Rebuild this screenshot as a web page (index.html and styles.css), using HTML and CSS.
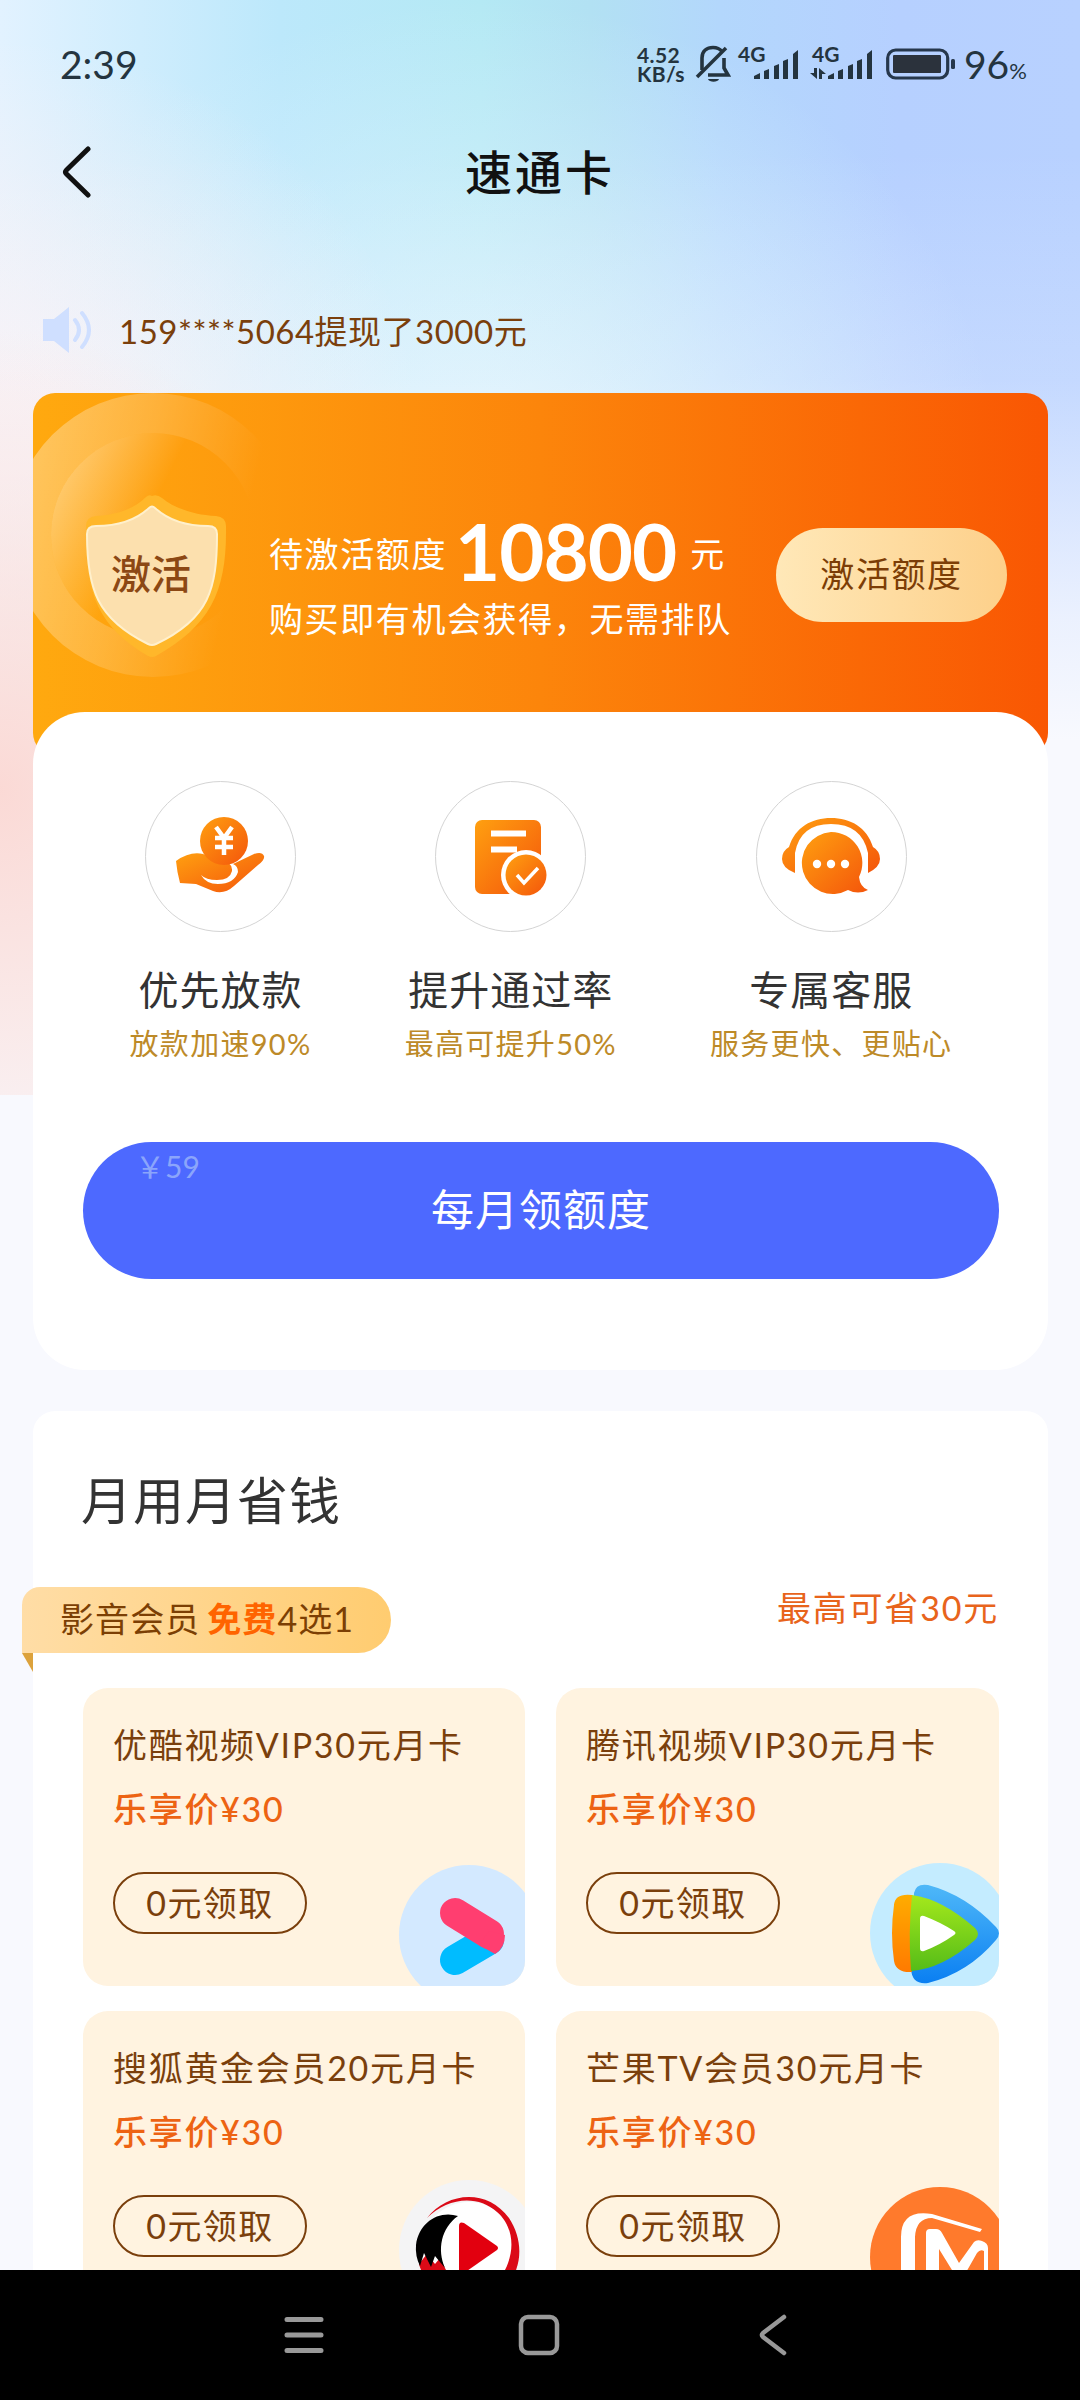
FILE: index.html
```html
<!DOCTYPE html>
<html lang="zh-CN">
<head>
    <meta charset="UTF-8">
    <meta name="viewport" content="width=device-width, initial-scale=1.0">
    <title>速通卡</title>
    <link rel="stylesheet" href="styles.css">
</head>
<body>
<div class="phone">
    <div class="status-bar">
        <span class="time">2:39</span>
        <div class="status-right">
            <div class="speed"><span>4.52</span><span>KB/s</span></div>
            <svg class="bell" width="36" height="40" viewBox="0 0 36 40" fill="none" stroke="#24343f" stroke-width="3.6">
                <path d="M7 26V14C7 7 12 3.500 18 3.500c4 0 7 1.500 9 4M29 14v10l4 7H13"/>
                <path d="M2 33L31 4"/>
                <path d="M13 35h11c-1 3.500-10 3.500-11 0z" fill="#24343f" stroke="none"/>
            </svg>
            <svg class="signal" width="62" height="40" viewBox="0 0 62 40" fill="#24343f">
                <text x="0" y="18" class="net">4G</text>
                <path d="M16 35v-3l6-3v6zM26 27l5-2v10h-5zM36 22l5-2v15h-5zM45 17l5-2v20h-5zM55 10l5-4v29h-5z"/>
            </svg>
            <svg class="signal second" width="64" height="40" viewBox="0 0 64 40" fill="#24343f">
                <text x="2" y="18" class="net">4G</text>
                <path d="M18 35v-3l6-3v6zM28 27l5-2v10h-5zM38 22l5-2v15h-5zM47 17l5-2v20h-5zM57 10l5-4v29h-5z"/>
                <path d="M4 24h3v11l-7-6h4zM9 24l7 6h-4v5H9z"/>
            </svg>
            <svg class="battery" width="72" height="32" viewBox="0 0 72 32">
                <rect x="1.700" y="2" width="60" height="28" rx="8" fill="none" stroke="#26374c" stroke-width="3.200"/>
                <rect x="7" y="7" width="48" height="18" rx="1" fill="#2b323c"/>
                <rect x="65" y="11" width="4" height="10" rx="1.500" fill="#26374c"/>
            </svg>
            <span class="percent">96<small>%</small></span>
        </div>
    </div>

    <header class="title-bar">
        <svg class="back" width="32" height="54" viewBox="0 0 32 54" fill="none" stroke="#111" stroke-width="5" stroke-linecap="round" stroke-linejoin="round">
            <path d="M27 4L5.500 25q-2 2 0 4L27 50"/>
        </svg>
        <h1>速通卡</h1>
    </header>

    <main>
        <div class="notice">
            <svg width="52" height="50" viewBox="0 0 52 50" fill="#cfdfff">
                <path d="M2 14h11L28 2v46L13 36H2z"/>
                <path d="M34 15q8 10 0 20M41 8q14 17 0 34" fill="none" stroke="#cfdfff" stroke-width="4" stroke-linecap="round"/>
            </svg>
            <span>159****5064提现了3000元</span>
        </div>

        <section class="banner">
            <svg class="shield" width="260" height="300" viewBox="0 0 260 300">
                <defs>
                    <linearGradient id="ring" x1="0" y1="0.350" x2="0.850" y2="0.550">
                        <stop offset="0" stop-color="#fff" stop-opacity="0.340"/>
                        <stop offset="0.500" stop-color="#fff" stop-opacity="0.180"/>
                        <stop offset="0.950" stop-color="#fff" stop-opacity="0"/>
                    </linearGradient>
                    <linearGradient id="disc" x1="0" y1="0.300" x2="0.500" y2="0.550">
                        <stop offset="0" stop-color="#fff" stop-opacity="0.400"/>
                        <stop offset="0.850" stop-color="#fff" stop-opacity="0"/>
                    </linearGradient>
                </defs>
                <path d="M-22 142a142 142 0 1 0 284 0a142 142 0 1 0 -284 0zM18 142a102 102 0 1 1 204 0a102 102 0 1 1 -204 0z" fill="url(#ring)" fill-rule="evenodd"/>
                <circle cx="120" cy="142" r="102" fill="url(#disc)"/>
                <path d="M119 103q-3-2-6 1c-12 12-30 18-50 19q-10 1-10 10c-1 65 10 100 62 130q4 2 8 0c55-31 71-65 70-130q0-9-10-10c-22-1-42-8-54-18q-5-4-10-2z" fill="#ffb72a"/>
                <path d="M116 115q3-3 6 0c12 11 28 18 53 18q9 0 9 8c0 55-8 85-61 110q-4 2-8 0C64 226 54 196 54 141q0-8 9-8c24 0 40-6 53-18z" fill="#fce0ae" stroke="#fff0cc" stroke-width="2"/>
            </svg>
            <span class="shield-text">激活</span>
            <div class="banner-info">
                <p class="amount"><span>待激活额度</span><b>10800</b><span>元</span></p>
                <p class="hint">购买即有机会获得，无需排队</p>
            </div>
            <button class="activate">激活额度</button>
        </section>

        <section class="rights">
            <div class="right-list">
                <div class="right-item">
                    <div class="icon-circle">
                        <svg width="90" height="80" viewBox="0 0 90 80">
                            <defs>
                                <linearGradient id="og" x1="0" y1="0" x2="1" y2="1">
                                    <stop offset="0" stop-color="#ffa010"/>
                                    <stop offset="1" stop-color="#f4550b"/>
                                </linearGradient>
                            </defs>
                            <path d="M0 44Q14 34 27 37Q34 40 45 44Q57 45 56 54Q54 63 41 63Q30 63 25 58Q30 67 42 67Q58 67 62 55Q62 49 57 47L78 37Q86 34 88 39Q89 43 82 48L58 69Q48 78 37 74L20 67L4 66Q1 55 0 44z" fill="url(#og)"/>
                            <circle cx="48" cy="24" r="24" fill="url(#og)"/>
                            <path d="M40 10l8 11 8-11M48 21v17M39 21h18M39 30h18" fill="none" stroke="#fff" stroke-width="4.500"/>
                        </svg>
                    </div>
                    <h3>优先放款</h3>
                    <p>放款加速90%</p>
                </div>
                <div class="right-item">
                    <div class="icon-circle">
                        <svg width="74" height="78" viewBox="0 0 74 78">
                            <rect x="1" y="2" width="66" height="74" rx="7" fill="url(#og)"/>
                            <path d="M17 15.500h35M17 31.500h26" stroke="#fff" stroke-width="6"/>
                            <circle cx="52" cy="57" r="25" fill="#fff"/>
                            <circle cx="52" cy="57" r="20.500" fill="url(#og)"/>
                            <path d="M43 57l7 8 14-15" fill="none" stroke="#fff" stroke-width="3.500"/>
                        </svg>
                    </div>
                    <h3>提升通过率</h3>
                    <p>最高可提升50%</p>
                </div>
                <div class="right-item">
                    <div class="icon-circle">
                        <svg width="98" height="80" viewBox="0 0 98 80">
                            <path d="M0 42Q0 34 7 30C13 10 30 1 49 1S85 10 91 30Q98 34 98 42T86 56V36Q80 7 49 7T13 36V56Q0 51 0 42z" fill="url(#og)"/>
                            <path d="M49 15a31 31 0 0 1 28 45q1 10 9 13-10 5-20 0a31 31 0 1 1-17-58z" fill="url(#og)"/>
                            <g fill="#fff"><circle cx="35" cy="47" r="4.200"/><circle cx="49" cy="47" r="4.200"/><circle cx="63" cy="47" r="4.200"/></g>
                        </svg>
                    </div>
                    <h3>专属客服</h3>
                    <p>服务更快、更贴心</p>
                </div>
            </div>
            <button class="get-quota"><span class="price-tag">￥59</span>每月领额度</button>
        </section>

        <section class="saving">
            <h2>月用月省钱</h2>
            <div class="saving-head">
                <div class="ribbon">影音会员 <b>免费</b>4选1</div>
                <span class="max-save">最高可省30元</span>
            </div>
            <div class="coupon-grid">
                <div class="coupon">
                    <h4>优酷视频VIP30元月卡</h4>
                    <p>乐享价¥30</p>
                    <button>0元领取</button>
                    <svg class="logo" width="140" height="140" viewBox="0 0 140 140">
                        <circle cx="70" cy="70" r="70" fill="#d3e9ff"/>
                        <path d="M56 95l34-20" stroke="#00bcff" stroke-width="30" stroke-linecap="round"/>
                        <path d="M56 48l34 21" stroke="#ff3e70" stroke-width="30" stroke-linecap="round"/>
                        <path d="M80 80L96 89Q106 83 106 70L90 66z" fill="#ff3e70"/>
                    </svg>
                </div>
                <div class="coupon">
                    <h4>腾讯视频VIP30元月卡</h4>
                    <p>乐享价¥30</p>
                    <button>0元领取</button>
                    <svg class="logo tencent" width="140" height="140" viewBox="0 0 140 140">
                        <defs>
                            <linearGradient id="tb" x1="0" y1="0" x2="0" y2="1"><stop offset="0" stop-color="#4fb8f8"/><stop offset="1" stop-color="#0a7ff2"/></linearGradient>
                            <linearGradient id="tg" x1="0" y1="0" x2="0" y2="1"><stop offset="0" stop-color="#a4e81c"/><stop offset="1" stop-color="#55bc18"/></linearGradient>
                            <linearGradient id="to" x1="0" y1="0" x2="0" y2="1"><stop offset="0" stop-color="#ffac00"/><stop offset="1" stop-color="#ff7a00"/></linearGradient>
                        </defs>
                        <circle cx="70" cy="70" r="70" fill="#c4ecff"/>
                        <path d="M44 30Q46 20 58 22Q96 32 126 64Q132 70 126 77Q98 110 58 120Q42 122 41 106z" fill="url(#tb)"/>
                        <path d="M42 32Q25 30 24 42Q20 70 24 98Q26 110 42 109z" fill="url(#to)"/>
                        <path d="M42 32Q72 36 105 65Q111 71 105 77Q72 106 41 108Q38 70 42 32z" fill="url(#tg)"/>
                        <path d="M50 56q0-4 4-3 16 6 30 15 3 2 0 4-14 10-30 16-4 1-4-3z" fill="#fff"/>
                    </svg>
                </div>
                <div class="coupon">
                    <h4>搜狐黄金会员20元月卡</h4>
                    <p>乐享价¥30</p>
                    <button>0元领取</button>
                    <svg class="logo sohu" width="140" height="140" viewBox="0 0 140 140">
                        <circle cx="70" cy="70" r="70" fill="#f4f4f5"/>
                        <circle cx="70" cy="70" r="48" fill="#fff"/>
                        <path d="M28 38C48 12 88 8 110 38C126 62 124 94 100 114C88 122 66 126 44 113C70 118 94 110 106 90C118 66 112 44 98 32C78 14 48 18 28 38z" fill="#db0a17"/>
                        <path d="M20 84l8-10 8 10 5-6 10 20-8 15Q24 100 20 84z" fill="#db0a17"/>
                        <path d="M59 36C40 30 20 42 17 65Q16 76 21 86L25 73L32 87L36 76L46 88C38 70 42 48 59 36z" fill="#000"/>
                        <path d="M60 46q0-5 5-3l33 23q2 2 0 4L65 93q-5 3-5-3z" fill="#e2000f"/>
                    </svg>
                </div>
                <div class="coupon">
                    <h4>芒果TV会员30元月卡</h4>
                    <p>乐享价¥30</p>
                    <button>0元领取</button>
                    <svg class="logo mango" width="140" height="140" viewBox="0 0 140 140">
                        <circle cx="70" cy="70" r="70" fill="#ff7a2c"/>
                        <path d="M112 42L62 27Q31 22 31 50V110H45V50Q46 31 62 31L110 45z" fill="#fff"/>
                        <path d="M56 110V46Q56 42 60 42H66Q70 42 72 46L89 76L104 55Q107 52 112 54Q118 56 118 61V110H114V64Q110 62 107 66L90 96L69 62V110z" fill="#fff"/>
                    </svg>
                </div>
            </div>
        </section>
    </main>

    <nav class="nav-bar">
        <svg width="44" height="44" viewBox="0 0 44 44" stroke="#999" stroke-width="5" stroke-linecap="round"><path d="M5 6.500h34M5 22h34M5 37.500h34"/></svg>
        <svg width="44" height="44" viewBox="0 0 44 44" fill="none" stroke="#999" stroke-width="4.500"><rect x="4" y="4" width="36" height="36" rx="7"/></svg>
        <svg width="44" height="44" viewBox="0 0 44 44" fill="none" stroke="#999" stroke-width="4.500" stroke-linecap="round" stroke-linejoin="round"><path d="M33 4L12 20q-2 2 0 4L33 40"/></svg>
    </nav>
</div>
</body>
</html>
```
FILE: styles.css
```css
* {
    box-sizing: border-box;
    margin: 0;
    padding: 0;
}

body {
    font-family: Lato, "Noto Sans CJK SC", sans-serif;
    background: #f8f9fe;
}

button {
    font-family: inherit;
    border: none;
}

h1, h2, h3, h4 {
    font-weight: 400;
}

svg {
    display: block;
    flex-shrink: 0;
}

.phone {
    width: 1080px;
    height: 2400px;
    display: flex;
    flex-direction: column;
    overflow: hidden;
    background:
        radial-gradient(ellipse 420px 460px at 0 790px, rgba(251, 214, 209, 0.9), rgba(251, 220, 215, 0.55) 50%, rgba(251, 225, 220, 0) 100%) 0 0 / 1080px 1095px no-repeat,
        linear-gradient(to bottom, rgba(248, 249, 254, 0) 150px, rgba(248, 249, 254, 0.2) 380px, rgba(248, 249, 254, 0.8) 620px, #f8f9fe 740px),
        radial-gradient(ellipse 420px 400px at 0 440px, #f8f1f5 10%, rgba(244, 244, 250, 0) 100%),
        radial-gradient(ellipse 520px 480px at 480px 480px, rgba(226, 243, 255, 0.9) 10%, rgba(226, 243, 255, 0) 100%),
        linear-gradient(to right, #e2f2ff 0, #bce8fb 280px, #b4e9f4 480px, #b2e1f3 590px, #b3d7fc 720px, #b6d0ff 900px, #b8d1ff 1080px);
}

/* status bar */
.status-bar {
    height: 128px;
    padding: 0 46px 0 60px;
    display: flex;
    justify-content: space-between;
    align-items: center;
    color: #24343f;
}

.time {
    font-size: 39px;
    line-height: 60px;
}

.status-right {
    display: flex;
    align-items: center;
}

.speed {
    width: 48px;
    display: flex;
    flex-direction: column;
    font-size: 21px;
    line-height: 19px;
    letter-spacing: 0.4px;
    font-weight: 700;
}

.bell {
    margin-left: 10px;
}

.signal {
    margin-left: 7px;
    overflow: visible;
}

.second {
    margin-left: 10px;
}

.net {
    font-size: 21px;
    font-weight: 700;
}

.battery {
    margin-left: 12px;
}

.percent {
    width: 70px;
    margin-left: 6px;
    font-size: 39px;
    white-space: nowrap;
}

.percent small {
    font-size: 22px;
}

/* title bar */
.title-bar {
    height: 88px;
    padding: 0 61px;
    display: grid;
    grid-template-columns: 1fr auto 1fr;
    align-items: center;
}

.title-bar h1 {
    font-size: 47px;
    line-height: 60px;
    letter-spacing: 3px;
    font-weight: 500;
    color: #111;
}

main {
    flex: 1;
    min-height: 0;
    padding: 0 32px 0 33px;
    overflow: hidden;
}

.notice {
    height: 58px;
    margin-top: 85px;
    padding-left: 8px;
    display: flex;
    align-items: center;
    gap: 26px;
    font-size: 33px;
    letter-spacing: 0.5px;
    color: #7a3f0c;
}

/* orange banner */
.banner {
    position: relative;
    height: 362px;
    margin-top: 34px;
    padding: 0 41px 0 236px;
    display: flex;
    justify-content: space-between;
    align-items: flex-start;
    border-radius: 22px;
    background: linear-gradient(to right, #ffa90f, #fc850b 50%, #f95703);
    overflow: hidden;
}

.shield {
    position: absolute;
    left: 0;
    top: 0;
}

.shield-text {
    position: absolute;
    left: 78px;
    top: 156px;
    font-size: 40px;
    line-height: 50px;
    font-weight: 500;
    color: #8c4814;
}

.banner-info {
    margin-top: 118px;
    font-size: 34px;
    color: #fff;
    white-space: nowrap;
}

.amount {
    display: flex;
    align-items: center;
    height: 80px;
    line-height: 80px;
    letter-spacing: 1.6px;
}

.amount span {
    padding-top: 6px;
}

.amount b {
    margin: 0 14px 0 8px;
    font-size: 78px;
    letter-spacing: -1px;
}

.hint {
    margin-top: 4px;
    line-height: 48px;
    letter-spacing: 1.6px;
}

.activate {
    width: 231px;
    height: 94px;
    margin-top: 135px;
    padding-bottom: 5px;
    border-radius: 47px;
    background: linear-gradient(to right, #ffe8b8, #fdd08a);
    font-size: 34px;
    letter-spacing: 1.6px;
    color: #7c3d06;
}

/* member rights */
.rights {
    position: relative;
    height: 658px;
    margin-top: -43px;
    padding: 69px 49px 0 50px;
    border-radius: 52px;
    background: #fff;
}

.right-list {
    display: flex;
    justify-content: space-around;
}

.right-item {
    display: flex;
    flex-direction: column;
    align-items: center;
}

.icon-circle {
    width: 151px;
    height: 151px;
    display: flex;
    justify-content: center;
    align-items: center;
    border: 1px solid #d4d4d4;
    border-radius: 50%;
}

.right-item h3 {
    margin-top: 28px;
    font-size: 40px;
    line-height: 60px;
    letter-spacing: 1px;
    color: #333;
}

.right-item p {
    margin-top: 4px;
    font-size: 29px;
    line-height: 40px;
    letter-spacing: 1.3px;
    color: #bd8a28;
}

.get-quota {
    position: relative;
    display: block;
    width: 100%;
    height: 137px;
    margin-top: 78px;
    padding-bottom: 7px;
    border-radius: 69px;
    background: #4d69ff;
    font-size: 43px;
    letter-spacing: 1px;
    color: #fff;
}

.price-tag {
    position: absolute;
    left: 52px;
    top: 6px;
    font-size: 30px;
    line-height: 36px;
    letter-spacing: 0;
    color: #8ba5fb;
}

/* monthly savings */
.saving {
    height: 1000px;
    margin-top: 41px;
    padding: 60px 49px 0 50px;
    border-radius: 22px;
    background: #fff;
}

.saving h2 {
    margin-left: -2px;
    font-size: 51px;
    line-height: 60px;
    letter-spacing: 1px;
    color: #333;
}

.saving-head {
    display: flex;
    justify-content: space-between;
    align-items: flex-start;
    margin-top: 56px;
}

.ribbon {
    position: relative;
    width: 369px;
    height: 66px;
    margin-left: -61px;
    padding-left: 38px;
    border-radius: 18px 33px 33px 0;
    background: linear-gradient(to right, #ffdda6, #ffcc70);
    font-size: 34px;
    line-height: 63px;
    letter-spacing: 1.1px;
    word-spacing: -3px;
    color: #7c3f04;
    white-space: nowrap;
}

.ribbon::after {
    content: "";
    position: absolute;
    left: 0;
    top: 66px;
    border-top: 19px solid #dca23c;
    border-left: 11px solid transparent;
}

.ribbon b {
    color: #ff6400;
}

.max-save {
    font-size: 34px;
    line-height: 42px;
    letter-spacing: 1.8px;
    color: #e8641c;
}

.coupon-grid {
    margin-top: 35px;
    display: grid;
    grid-template-columns: 442px 443px;
    grid-auto-rows: 298px;
    column-gap: 31px;
    row-gap: 25px;
}

.coupon {
    position: relative;
    padding: 33px 0 0 30px;
    border-radius: 25px;
    background: #fff3e0;
    overflow: hidden;
}

.coupon h4 {
    font-size: 34px;
    line-height: 48px;
    letter-spacing: 1.7px;
    color: #7a3f0c;
}

.coupon p {
    margin-top: 16px;
    font-size: 34px;
    line-height: 48px;
    letter-spacing: 1.7px;
    font-weight: 500;
    color: #ed6313;
}

.coupon button {
    display: block;
    width: 194px;
    height: 62px;
    margin-top: 39px;
    border: 2px solid #7a3f0c;
    border-radius: 31px;
    background: none;
    font-size: 34px;
    line-height: 54px;
    letter-spacing: 1.4px;
    color: #7a3f0c;
}

.logo {
    position: absolute;
    left: 316px;
    top: 177px;
}

.tencent {
    left: 314px;
    top: 175px;
}

.sohu {
    top: 169px;
}

.mango {
    left: 314px;
    top: 176px;
}

/* android navigation */
.nav-bar {
    height: 130px;
    padding: 0 285px 0 282px;
    display: flex;
    justify-content: space-between;
    align-items: center;
    background: #000;
}
```
